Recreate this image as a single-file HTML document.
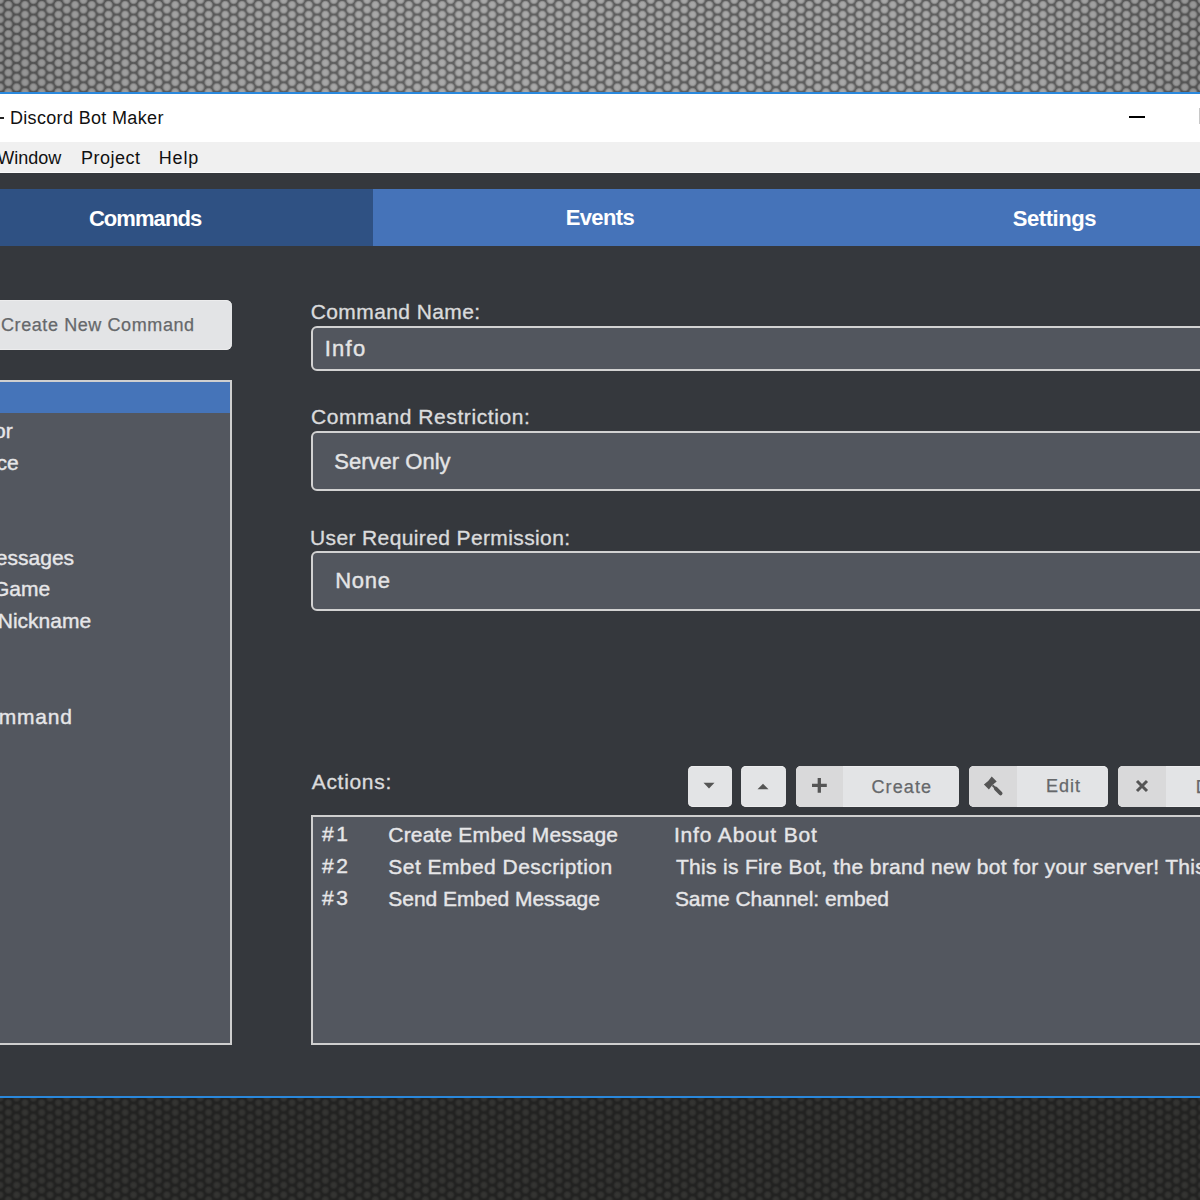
<!DOCTYPE html>
<html><head><meta charset="utf-8">
<style>
*{margin:0;padding:0;box-sizing:border-box}
html,body{width:1200px;height:1200px;overflow:hidden;background:#35383d;font-family:"Liberation Sans",sans-serif}
.abs{position:absolute}
#toptex{left:0;top:0;width:1200px;height:92px;background-color:#5c5c5c;
 background-image:linear-gradient(90deg,rgba(0,0,0,0.12) 0,rgba(0,0,0,0.04) 150px,rgba(255,255,255,0.03) 450px,rgba(0,0,0,0) 700px,rgba(255,255,255,0.02) 1000px,rgba(0,0,0,0.1) 1200px),
 radial-gradient(circle at center,#ababab 0,#a3a3a3 2.6px,#8a8a8a 3.6px,rgba(92,92,92,0) 4.5px),
 radial-gradient(circle at center,#ababab 0,#a3a3a3 2.6px,#8a8a8a 3.6px,rgba(92,92,92,0) 4.5px);
 background-size:100% 100%,16.7px 9.7px,16.7px 9.7px;background-position:0 0,0 0,8.35px 4.85px}
#botex{left:0;top:1098px;width:1200px;height:102px;background-color:#222221;
 background-image:radial-gradient(circle at center,#363634 0,#323230 2.4px,#2a2a29 3.4px,rgba(34,34,33,0) 4.4px),
 radial-gradient(circle at center,#363634 0,#323230 2.4px,#2a2a29 3.4px,rgba(34,34,33,0) 4.4px);
 background-size:16.7px 9.7px;background-position:0 0,8.35px 4.85px}
.bline{left:0;width:1200px;height:2px;background:#2a88dc}
.tt{color:#111;font-size:18px;white-space:nowrap}
.tab{color:#fff;font-weight:bold;font-size:21px;white-space:nowrap}
.lbl{color:#dadbdc;font-size:21px;white-space:nowrap;-webkit-text-stroke:0.35px #dadbdc}
.field{background:#52565e;border:2px solid #d2d2d2;border-radius:6px}
.ft{color:#e4e4e5;font-size:22px;white-space:nowrap;-webkit-text-stroke:0.4px #e4e4e5}
.btn{background:#e3e4e6;border-radius:5px;overflow:hidden;box-shadow:inset 0 1px 0 #ececed,inset 0 -1px 0 #ececed}
.seg{width:47px;height:41px;background:#d9d9da}
.bt{color:#66686b;font-size:18px;white-space:nowrap;-webkit-text-stroke:0.25px #66686b}
.row{color:#e6e6e8;font-size:21px;white-space:nowrap;-webkit-text-stroke:0.4px #e6e6e8}
.ico{position:absolute;overflow:visible}
</style></head><body>
<div id="toptex" class="abs"></div>
<div class="abs bline" style="top:92px"></div>
<div class="abs" style="left:0;top:94px;width:1200px;height:48px;background:#fff"></div>
<div class="abs" style="left:0;top:117px;width:4px;height:1.5px;background:#222"></div>
<div class="abs tt" style="left:9.9px;top:107.9px;font-size:18px;letter-spacing:0.34px">Discord Bot Maker</div>

<div class="abs" style="left:1129px;top:116px;width:16px;height:2px;background:#000"></div>
<div class="abs" style="left:1199px;top:108px;width:1px;height:16px;background:#c8c8c8"></div>
<div class="abs" style="left:0;top:142px;width:1200px;height:30px;background:#f0f0f0"></div>
<div class="abs" style="left:0;top:172px;width:1200px;height:1px;background:#fbfbfb"></div>
<div class="abs tt" style="left:-2.7px;top:147.8px;font-size:18px;letter-spacing:0.0px">Window</div>
<div class="abs tt" style="left:81.0px;top:147.8px;font-size:18px;letter-spacing:0.5px">Project</div>
<div class="abs tt" style="left:158.7px;top:147.8px;font-size:18px;letter-spacing:0.87px">Help</div>

<div class="abs" style="left:0;top:189px;width:1200px;height:57px;background:#4573b9"></div>
<div class="abs" style="left:0;top:189px;width:373px;height:57px;background:#2f5183"></div>
<div class="abs tab" style="left:88.9px;top:206.0px;font-size:22px;letter-spacing:-0.93px">Commands</div>
<div class="abs tab" style="left:565.7px;top:205.0px;font-size:22px;letter-spacing:-0.64px">Events</div>
<div class="abs tab" style="left:1012.8px;top:206.0px;font-size:22px;letter-spacing:-0.46px">Settings</div>


<div class="abs btn" style="left:-10px;top:300px;width:242px;height:50px;border-radius:6px"></div>
<div class="abs bt" style="left:1.0px;top:314.5px;font-size:18px;letter-spacing:0.59px">Create New Command</div>

<div class="abs" style="left:-10px;top:380px;width:242px;height:665px;background:#53575f;border:2px solid #cfcfcf"></div>
<div class="abs" style="left:0;top:382px;width:230px;height:31px;background:#4574b9"></div>
<div class="abs row" style="left:-37.5px;top:419.3px;font-size:21px;letter-spacing:0.0px">Color</div>
<div class="abs row" style="left:-57.1px;top:451.4px;font-size:21px;letter-spacing:0.0px">Balance</div>
<div class="abs row" style="left:-88.2px;top:546.4px;font-size:21px;letter-spacing:0.0px">Delete Messages</div>
<div class="abs row" style="left:-44.4px;top:576.7px;font-size:21px;letter-spacing:0.0px">Set Game</div>
<div class="abs row" style="left:-39.6px;top:609.3px;font-size:21px;letter-spacing:0.0px">Set Nickname</div>
<div class="abs row" style="left:-1.3px;top:704.8px;font-size:21px;letter-spacing:0.82px">mmand</div>


<div class="abs lbl" style="left:310.7px;top:300.0px;font-size:21px;letter-spacing:0.41px">Command Name:</div>

<div class="abs field" style="left:311px;top:326px;width:1000px;height:45px"></div>
<div class="abs ft" style="left:324.7px;top:336.0px;font-size:22px;letter-spacing:1.27px">Info</div>

<div class="abs lbl" style="left:311.0px;top:405.0px;font-size:21px;letter-spacing:0.58px">Command Restriction:</div>

<div class="abs field" style="left:311px;top:431px;width:1000px;height:60px"></div>
<div class="abs ft" style="left:334.3px;top:449.3px;font-size:22px;letter-spacing:0.01px">Server Only</div>

<div class="abs lbl" style="left:310.0px;top:526.0px;font-size:21px;letter-spacing:0.38px">User Required Permission:</div>

<div class="abs field" style="left:311px;top:551px;width:1000px;height:60px"></div>
<div class="abs ft" style="left:335.3px;top:568.3px;font-size:22px;letter-spacing:0.67px">None</div>


<div class="abs lbl" style="left:311.7px;top:770.0px;font-size:21px;letter-spacing:0.7px">Actions:</div>

<div class="abs btn" style="left:688px;top:766px;width:44px;height:41px"></div>
<svg class="ico" style="left:703px;top:782px" width="12" height="7"><path d="M0.5 0.8 L11.5 0.8 L6 6.5 Z" fill="#555"/></svg>
<div class="abs btn" style="left:741px;top:766px;width:45px;height:41px"></div>
<svg class="ico" style="left:757px;top:783px" width="12" height="7"><path d="M0.5 6.3 L11.5 6.3 L6 0.8 Z" fill="#555"/></svg>

<div class="abs btn" style="left:796px;top:766px;width:163px;height:41px"><div class="seg"></div></div>
<svg class="ico" style="left:811px;top:777px" width="17" height="17"><path d="M1 8.3 H15.8 M8.3 1 V15.8" stroke="#555" stroke-width="3.3"/></svg>
<div class="abs bt" style="left:871.5px;top:776.5px;font-size:18px;letter-spacing:1.1px">Create</div>

<div class="abs btn" style="left:969px;top:766px;width:139px;height:41px"><div class="seg" style="width:48px"></div></div>
<svg class="ico" style="left:980px;top:773px" width="26" height="26"><path d="M11.7 3.6 L16.7 8.6 L12.4 12.1 L8.9 16.4 L3.9 11.4 L8.2 7.9 Z" fill="#555"/><path d="M12.5 12.3 L16.5 16.3" stroke="#555" stroke-width="2"/><path d="M15.8 15.6 L20.6 20.4" stroke="#555" stroke-width="3.8" stroke-linecap="round"/></svg>
<div class="abs bt" style="left:1045.9px;top:776.3px;font-size:18px;letter-spacing:1.03px">Edit</div>

<div class="abs btn" style="left:1118px;top:766px;width:120px;height:41px"><div class="seg" style="width:48px"></div></div>
<svg class="ico" style="left:1135px;top:779px" width="14" height="14"><path d="M2 2 L12 12 M12 2 L2 12" stroke="#555" stroke-width="3"/></svg>
<div class="abs bt" style="left:1195.7px;top:776.5px;font-size:18px;letter-spacing:0.0px">Delete</div>


<div class="abs" style="left:311px;top:815px;width:1000px;height:230px;background:#53575f;border:2px solid #cfcfcf"></div>
<div class="abs row" style="left:321.9px;top:821.9px;font-size:21px;letter-spacing:2.7px">#1</div>
<div class="abs row" style="left:388.3px;top:822.9px;font-size:21px;letter-spacing:0.17px">Create Embed Message</div>
<div class="abs row" style="left:673.9px;top:822.7px;font-size:21px;letter-spacing:0.85px">Info About Bot</div>

<div class="abs row" style="left:321.9px;top:853.9px;font-size:21px;letter-spacing:2.7px">#2</div>
<div class="abs row" style="left:388.3px;top:854.9px;font-size:21px;letter-spacing:0.45px">Set Embed Description</div>
<div class="abs row" style="left:675.9px;top:854.9px;font-size:21px;letter-spacing:0.32px">This is Fire Bot, the brand new bot for your server! This is</div>

<div class="abs row" style="left:321.9px;top:886.0px;font-size:21px;letter-spacing:2.7px">#3</div>
<div class="abs row" style="left:388.3px;top:887.0px;font-size:21px;letter-spacing:-0.05px">Send Embed Message</div>
<div class="abs row" style="left:674.9px;top:887.0px;font-size:21px;letter-spacing:-0.04px">Same Channel: embed</div>


<div class="abs bline" style="top:1096px"></div>
<div id="botex" class="abs"></div>
</body></html>
